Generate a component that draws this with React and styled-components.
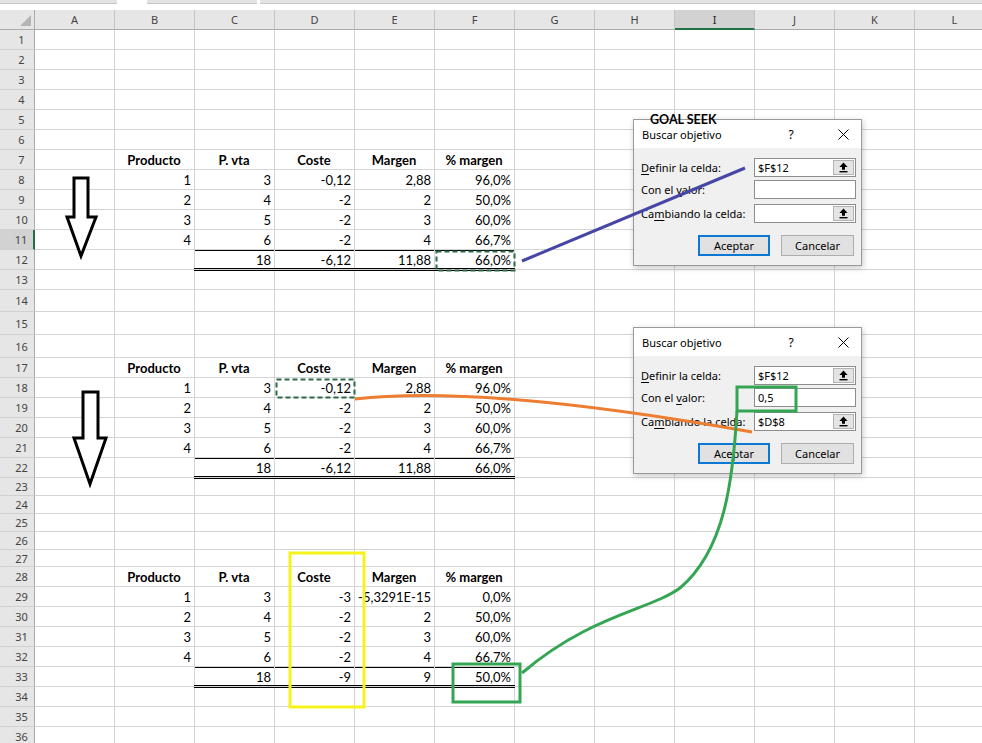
import React from 'react';
import styled, { createGlobalStyle, css } from 'styled-components';

const GlobalStyle = createGlobalStyle`
  html, body { margin: 0; padding: 0; background: #fff; overflow: hidden; }
  body { width: 982px; height: 743px; }
`;

const COLS = ['A', 'B', 'C', 'D', 'E', 'F', 'G', 'H', 'I', 'J', 'K', 'L'];
const ROW_H = [
  ...Array(13).fill(20),
  22, 23, 23,
  ...Array(6).fill(20),
  18, 18, 18, 18, 17,
  ...Array(9).fill(20),
];

const HEAD = ['Producto', 'P. vta', 'Coste', 'Margen', '% margen'];
const T12 = [
  [1, 3, '-0,12', '2,88', '96,0%'],
  [2, 4, '-2', '2', '50,0%'],
  [3, 5, '-2', '3', '60,0%'],
  [4, 6, '-2', '4', '66,7%'],
  ['', 18, '-6,12', '11,88', '66,0%'],
];
const T3 = [
  [1, 3, '-3', '-5,3291E-15', '0,0%'],
  [2, 4, '-2', '2', '50,0%'],
  [3, 5, '-2', '3', '60,0%'],
  [4, 6, '-2', '4', '66,7%'],
  ['', 18, '-9', '9', '50,0%'],
];
const TABLES = [
  { row: 7, data: T12 },
  { row: 17, data: T12 },
  { row: 28, data: T3 },
];

const CELLS = {};
TABLES.forEach(({ row, data }) => {
  HEAD.forEach((h, i) => {
    CELLS[`${COLS[i + 1]}${row}`] = { v: h, bold: true, center: true };
  });
  data.forEach((r, ri) => {
    r.forEach((v, ci) => {
      CELLS[`${COLS[ci + 1]}${row + 1 + ri}`] = { v: String(v), total: ri === 4 && ci >= 1 };
    });
  });
});

const Page = styled.div`
  position: relative;
  width: 982px;
  height: 743px;
  overflow: hidden;
  background: #fff;
`;

const TopStrip = styled.div`
  height: 10px;
  display: flex;
  align-items: flex-start;
  background: #fff;
`;

const StripBar = styled.div`
  flex: ${(p) => (p.$grow ? 1 : 'none')};
  width: ${(p) => p.$w || 0}px;
  margin-left: ${(p) => p.$ml || 0}px;
  height: 3px;
  background: #e3e3e3;
  border-bottom: 1px solid #c9c9c9;
`;

const Sheet = styled.div`
  display: grid;
  grid-template-columns: 35px repeat(12, 80px);
  grid-template-rows: 20px ${ROW_H.map((h) => `${h}px`).join(' ')};
`;

const Corner = styled.div`
  position: relative;
  box-sizing: border-box;
  background: #e6e6e6;
  border-right: 1px solid #ababab;
  border-bottom: 1px solid #ababab;
  &::after {
    content: '';
    position: absolute;
    right: 3px;
    bottom: 3px;
    width: 0;
    height: 0;
    border-left: 11px solid transparent;
    border-bottom: 11px solid #b5b5b5;
  }
`;

const ColHead = styled.div`
  box-sizing: border-box;
  background: ${(p) => (p.$sel ? '#d2d2d2' : '#e6e6e6')};
  border-right: 1px solid #c4c4c4;
  border-bottom: ${(p) => (p.$sel ? '2px solid #217346' : '1px solid #ababab')};
  display: flex;
  align-items: center;
  justify-content: center;
  font: 400 11px/1 'Noto Sans', sans-serif;
  color: ${(p) => (p.$sel ? '#222' : '#444')};
`;

const RowHead = styled.div`
  box-sizing: border-box;
  background: ${(p) => (p.$sel ? '#d2d2d2' : '#e6e6e6')};
  border-right: ${(p) => (p.$sel ? '2px solid #217346' : '1px solid #ababab')};
  border-bottom: 1px solid #d0d0d0;
  display: flex;
  align-items: center;
  justify-content: center;
  padding-left: 9px;
  font: 400 11px/1 'Noto Sans', sans-serif;
  color: #444;
`;

const Cell = styled.div`
  box-sizing: border-box;
  border-right: 1px solid #d4d4d4;
  border-bottom: 1px solid #d4d4d4;
  display: flex;
  align-items: flex-end;
  justify-content: ${(p) => (p.$center ? 'center' : 'flex-end')};
  padding: 0 3px 1px 2px;
  overflow: hidden;
  white-space: nowrap;
  font-family: Lato, 'Liberation Sans', sans-serif;
  font-size: 13px;
  line-height: 16px;
  font-weight: ${(p) => (p.$bold ? 700 : 400)};
  color: #000;
  ${(p) =>
    p.$total &&
    css`
      position: relative;
      overflow: visible;
      box-shadow: inset 0 1px 0 #000;
      &::after {
        content: '';
        position: absolute;
        left: -1px;
        right: -1px;
        bottom: -2px;
        height: 1px;
        border-top: 1px solid #000;
        border-bottom: 1px solid #000;
      }
    `}
`;

const CellText = styled.span`
  display: block;
  flex: none;
`;

/* ---------- Dialog ---------- */

const Dialog = styled.div`
  position: absolute;
  left: 633px;
  top: ${(p) => p.$top}px;
  width: 229px;
  box-sizing: border-box;
  border: 1px solid #9a9a9a;
  background: #f0f0f0;
  box-shadow: 1px 2px 6px rgba(0, 0, 0, 0.22);
  font-family: 'Noto Sans', sans-serif;
  font-size: 11px;
  color: #000;
`;

const TitleBar = styled.div`
  height: 28px;
  background: #fff;
  display: grid;
  grid-template-columns: 1fr 30px 30px;
  column-gap: 22px;
  align-items: center;
  padding: 0 3px 0 8px;
`;

const Title = styled.span`
  font-size: 11px;
`;

const TitleBtn = styled.span`
  display: flex;
  align-items: center;
  justify-content: center;
  font-size: 12px;
`;

const Body = styled.div`
  padding: 10px 5px 9px 7px;
  display: flex;
  flex-direction: column;
`;

const FieldRow = styled.div`
  display: grid;
  grid-template-columns: 1fr 102px;
  align-items: center;
  height: 19px;
  margin-top: ${(p) => p.$mt || 0}px;
`;

const Label = styled.span`
  white-space: nowrap;
  & u { text-decoration-thickness: 1px; text-underline-offset: 2px; }
`;

const Field = styled.div`
  box-sizing: border-box;
  height: 19px;
  background: #fff;
  border: 1px solid #8d8d8d;
  display: flex;
  align-items: center;
  padding: 0 1px 0 3px;
`;

const FieldText = styled.span`
  flex: 1;
`;

const PickBtn = styled.span`
  box-sizing: border-box;
  width: 21px;
  height: 15px;
  background: #e4e4e4;
  border: 1px solid #b3b3b3;
  display: flex;
  align-items: center;
  justify-content: center;
`;

const Buttons = styled.div`
  display: flex;
  justify-content: flex-end;
  gap: 11px;
  margin-top: 12px;
  padding-right: 2px;
`;

const Button = styled.span`
  box-sizing: border-box;
  width: ${(p) => (p.$primary ? 72 : 73)}px;
  height: 21px;
  background: #e1e1e1;
  border: ${(p) => (p.$primary ? '2px solid #0a78d4' : '1px solid #adadad')};
  display: flex;
  align-items: center;
  justify-content: center;
`;

const GoalSeek = styled.div`
  position: absolute;
  left: 650px;
  top: 114px;
  font: 700 12.5px/1 Lato, 'Liberation Sans', sans-serif;
  color: #000;
  z-index: 2;
`;

const Overlay = styled.svg`
  position: absolute;
  left: 0;
  top: 0;
  pointer-events: none;
  z-index: 3;
`;

const PickIcon = () => (
  <svg width="9" height="11" viewBox="0 0 9 11">
    <path d="M4.5 0.5 L8.6 5 H6 V7.8 H3 V5 H0.4 Z" fill="#000" />
    <rect x="0.5" y="9" width="8" height="1.4" fill="#000" />
  </svg>
);

const CloseIcon = () => (
  <svg width="11" height="11" viewBox="0 0 11 11">
    <path d="M0.5 0.5 L10.5 10.5 M10.5 0.5 L0.5 10.5" stroke="#000" strokeWidth="1" />
  </svg>
);

const GoalDialog = ({ top, f1, f2, f3 }) => (
  <Dialog $top={top}>
    <TitleBar>
      <Title>Buscar objetivo</Title>
      <TitleBtn>?</TitleBtn>
      <TitleBtn>
        <CloseIcon />
      </TitleBtn>
    </TitleBar>
    <Body>
      <FieldRow>
        <Label>
          <u>D</u>efinir la celda:
        </Label>
        <Field>
          <FieldText>{f1}</FieldText>
          <PickBtn>
            <PickIcon />
          </PickBtn>
        </Field>
      </FieldRow>
      <FieldRow $mt={3}>
        <Label>
          Con el <u>v</u>alor:
        </Label>
        <Field>
          <FieldText>{f2}</FieldText>
        </Field>
      </FieldRow>
      <FieldRow $mt={5}>
        <Label>
          Ca<u>m</u>biando la celda:
        </Label>
        <Field>
          <FieldText>{f3}</FieldText>
          <PickBtn>
            <PickIcon />
          </PickBtn>
        </Field>
      </FieldRow>
      <Buttons>
        <Button $primary>Aceptar</Button>
        <Button>Cancelar</Button>
      </Buttons>
    </Body>
  </Dialog>
);

const Annotations = () => (
  <Overlay width="982" height="743" viewBox="0 0 982 743">
    {/* down arrows */}
    <polygon
      points="74,178 88,178 88,217 96,217 81,256 67,217 74,217"
      fill="#fff"
      stroke="#000"
      strokeWidth="3"
      strokeLinejoin="miter"
    />
    <polygon
      points="83,392 98,392 98,438 106,438 90,484 74,438 83,438"
      fill="#fff"
      stroke="#000"
      strokeWidth="3"
      strokeLinejoin="miter"
    />
    {/* marching ants */}
    <rect x="436.5" y="251.5" width="78" height="19" fill="none" stroke="#2b6a46" strokeWidth="2" strokeDasharray="5 3" />
    <rect x="276.5" y="379.5" width="78" height="18" fill="none" stroke="#2b6a46" strokeWidth="2" strokeDasharray="5 3" />
    {/* blue link */}
    <line x1="522" y1="261" x2="745" y2="168" stroke="#4646a6" strokeWidth="3" />
    {/* orange curve */}
    <path d="M355 399 Q480 384 752 432" fill="none" stroke="#ed7d31" strokeWidth="3" />
    {/* green */}
    <rect x="737" y="387" width="59" height="24" fill="none" stroke="#34a553" strokeWidth="3" />
    <rect x="453" y="664" width="67" height="38" fill="none" stroke="#34a553" strokeWidth="3" />
    <path d="M737 411 C733 480 725 550 680 588 C650 610 590 615 522 673" fill="none" stroke="#34a553" strokeWidth="3" />
    {/* yellow */}
    <rect x="290" y="553" width="74" height="154" fill="none" stroke="#f6f31a" strokeWidth="3" />
  </Overlay>
);

export default function App() {
  return (
    <>
      <GlobalStyle />
      <Page>
        <TopStrip>
          <StripBar $w={117} />
          <StripBar $w={110} $ml={30} />
          <StripBar $grow $ml={3} />
        </TopStrip>
        <Sheet>
          <Corner />
          {COLS.map((c) => (
            <ColHead key={c} $sel={c === 'I'}>
              {c}
            </ColHead>
          ))}
          {ROW_H.map((_, i) => {
            const r = i + 1;
            return (
              <React.Fragment key={r}>
                <RowHead $sel={r === 11}>{r}</RowHead>
                {COLS.map((c) => {
                  const d = CELLS[`${c}${r}`];
                  return (
                    <Cell key={c} $bold={d?.bold} $center={d?.center} $total={d?.total}>
                      {d && d.v ? <CellText>{d.v}</CellText> : null}
                    </Cell>
                  );
                })}
              </React.Fragment>
            );
          })}
        </Sheet>
        <GoalDialog top={119} f1="$F$12" f2="" f3="" />
        <GoalDialog top={327} f1="$F$12" f2="0,5" f3="$D$8" />
        <GoalSeek>GOAL SEEK</GoalSeek>
        <Annotations />
      </Page>
    </>
  );
}
